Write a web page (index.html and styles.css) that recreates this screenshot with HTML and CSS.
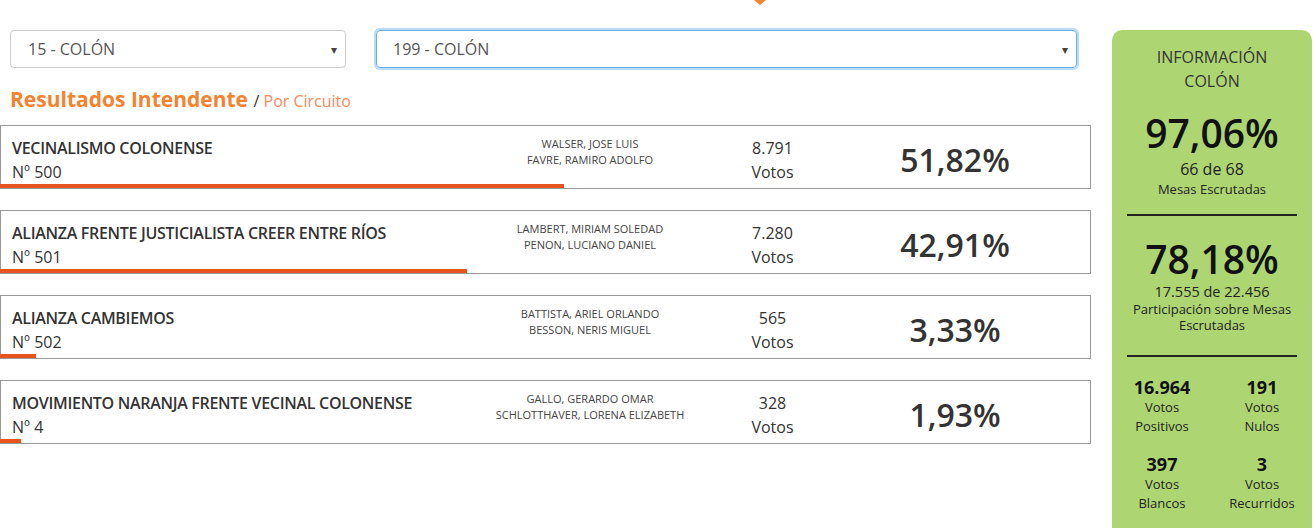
FILE: index.html
```html
<!DOCTYPE html>
<html lang="es">
<head>
    <meta charset="UTF-8">
    <title>Resultados Intendente - Colón</title>
    <link rel="stylesheet" href="styles.css">
</head>
<body>

    <div class="pointer"></div>

    <div class="page">
        <div class="main">
            <!-- selectores -->
            <div class="filters">
                <div class="select select-dep">
                    <span>15 - COLÓN</span>
                    <span class="caret">▾</span>
                </div>
                <div class="select select-circ focused">
                    <span>199 - COLÓN</span>
                    <span class="caret">▾</span>
                </div>
            </div>

            <h2 class="section-title">Resultados Intendente <small><span class="sep">/</span> Por Circuito</small></h2>

            <!-- listas -->
            <div class="results">
                <div class="row">
                    <div class="row-body">
                        <div class="party">
                            <div class="party-name">VECINALISMO COLONENSE</div>
                            <div class="party-num">Nº 500</div>
                        </div>
                        <div class="candidates">WALSER, JOSE LUIS<br>FAVRE, RAMIRO ADOLFO</div>
                        <div class="votes">8.791<br>Votos</div>
                        <div class="pct">51,82%</div>
                    </div>
                    <div class="bar" style="width: 51.82%"></div>
                </div>

                <div class="row">
                    <div class="row-body">
                        <div class="party">
                            <div class="party-name">ALIANZA FRENTE JUSTICIALISTA CREER ENTRE RÍOS</div>
                            <div class="party-num">Nº 501</div>
                        </div>
                        <div class="candidates">LAMBERT, MIRIAM SOLEDAD<br>PENON, LUCIANO DANIEL</div>
                        <div class="votes">7.280<br>Votos</div>
                        <div class="pct">42,91%</div>
                    </div>
                    <div class="bar" style="width: 42.91%"></div>
                </div>

                <div class="row">
                    <div class="row-body">
                        <div class="party">
                            <div class="party-name">ALIANZA CAMBIEMOS</div>
                            <div class="party-num">Nº 502</div>
                        </div>
                        <div class="candidates">BATTISTA, ARIEL ORLANDO<br>BESSON, NERIS MIGUEL</div>
                        <div class="votes">565<br>Votos</div>
                        <div class="pct">3,33%</div>
                    </div>
                    <div class="bar" style="width: 3.33%"></div>
                </div>

                <div class="row">
                    <div class="row-body">
                        <div class="party">
                            <div class="party-name">MOVIMIENTO NARANJA FRENTE VECINAL COLONENSE</div>
                            <div class="party-num">Nº 4</div>
                        </div>
                        <div class="candidates">GALLO, GERARDO OMAR<br>SCHLOTTHAVER, LORENA ELIZABETH</div>
                        <div class="votes">328<br>Votos</div>
                        <div class="pct">1,93%</div>
                    </div>
                    <div class="bar" style="width: 1.93%"></div>
                </div>
            </div>
        </div>

        <!-- panel de informacion -->
        <div class="info-panel">
            <h3 class="info-title">INFORMACIÓN<br>COLÓN</h3>

            <div class="big">97,06%</div>
            <div class="sub">66 de 68</div>
            <div class="small">Mesas Escrutadas</div>

            <hr class="divider">

            <div class="big big-2">78,18%</div>
            <div class="small total">17.555 de 22.456</div>
            <div class="small tight">Participación sobre Mesas Escrutadas</div>

            <hr class="divider divider-2">

            <div class="stats">
                <div class="stat">
                    <strong>16.964</strong>
                    <span>Votos<br>Positivos</span>
                </div>
                <div class="stat">
                    <strong>191</strong>
                    <span>Votos<br>Nulos</span>
                </div>
                <div class="stat">
                    <strong>397</strong>
                    <span>Votos<br>Blancos</span>
                </div>
                <div class="stat">
                    <strong>3</strong>
                    <span>Votos<br>Recurridos</span>
                </div>
            </div>
        </div>
    </div>

</body>
</html>
```

FILE: styles.css
```css
* {
    margin: 0;
    padding: 0;
    box-sizing: border-box;
}

body {
    font-family: 'Open Sans', 'Liberation Sans', sans-serif;
    background: #fff;
    color: #333;
    width: 1314px;
    height: 528px;
    overflow: hidden;
}

/* flecha del menu superior */
.pointer {
    width: 0;
    height: 0;
    margin-left: 754px;
    border-left: 6px solid transparent;
    border-right: 6px solid transparent;
    border-top: 5px solid #f5822f;
}

.page {
    display: flex;
    gap: 21px;
    margin-top: 25px;
}

.main {
    width: 1091px;
}

/* selectores */
.filters {
    display: flex;
    gap: 30px;
    padding-left: 10px;
}

.select {
    height: 38px;
    border: 1px solid #ccc;
    border-radius: 4px;
    display: flex;
    align-items: center;
    justify-content: space-between;
    padding: 0 8px 0 17px;
    font-size: 16px;
    color: #555;
}

.select-dep {
    width: 336px;
}

.select-circ {
    width: 701px;
    padding-left: 16px;
}

.select.focused {
    border-color: #66afe9;
    box-shadow: 0 0 0 2px rgba(102, 175, 233, 0.45);
}

.caret {
    font-size: 12px;
    color: #444;
}

.section-title {
    font-size: 21px;
    font-weight: 700;
    color: #f5822f;
    line-height: 28px;
    margin: 17px 0 10px 10px;
}

.section-title small {
    font-size: 16px;
    font-weight: 400;
    color: #f58a5c;
}

.section-title .sep {
    color: #333;
}

/* filas de resultados */
.row {
    border: 1px solid #999;
    margin-bottom: 21px;
    padding-top: 10px;
}

.row-body {
    display: grid;
    grid-template-columns: 489px 200px 165px 200px 1fr;
    height: 48px;
}

.party {
    padding-left: 11px;
    font-size: 16px;
    line-height: 24px;
}

.party-name {
    font-weight: 600;
    letter-spacing: -0.3px;
}

.candidates {
    font-size: 11px;
    line-height: 16px;
    text-align: center;
    color: #444;
}

.votes {
    font-size: 16px;
    line-height: 24px;
    text-align: center;
}

.pct {
    font-size: 32px;
    font-weight: 600;
    text-align: center;
    align-self: center;
    line-height: 40px;
}

.bar {
    height: 4px;
    background: #e8541e;
    margin-left: -1px;
}

/* panel de informacion */
.info-panel {
    width: 200px;
    height: 520px;
    background: #add673;
    border-radius: 10px 10px 0 0;
    padding-top: 15px;
    text-align: center;
    color: #222;
}

.info-title {
    font-size: 16px;
    font-weight: 400;
    line-height: 24px;
    color: #333;
}

.big {
    font-size: 39px;
    font-weight: 600;
    line-height: 48px;
    margin-top: 16px;
    color: #111;
}

.big-2 {
    line-height: 44px;
    margin-top: 21px;
}

.sub {
    font-size: 16px;
    line-height: 22px;
    margin-top: 1px;
}

.small {
    font-size: 13px;
    line-height: 18px;
}

.small.total {
    font-size: 14.5px;
    line-height: 18px;
    margin-top: 2px;
}

.small.tight {
    line-height: 16px;
    padding: 0 10px;
}

.divider {
    border: none;
    height: 2px;
    background: #222;
    margin: 16px 15px 0;
}

.divider-2 {
    margin-top: 22px;
}

.stats {
    display: grid;
    grid-template-columns: 1fr 1fr;
    row-gap: 17px;
    margin-top: 19px;
}

.stat strong {
    display: block;
    font-size: 18px;
    font-weight: 700;
    line-height: 22px;
    color: #111;
}

.stat span {
    display: block;
    font-size: 13px;
    line-height: 19px;
}
```
